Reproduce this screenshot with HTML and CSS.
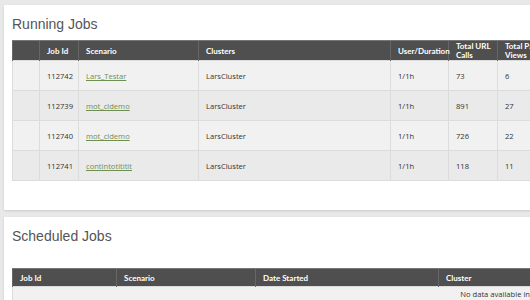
FILE: index.html
```html
<!DOCTYPE html>
<html lang="en">
<head>
    <meta charset="UTF-8">
    <title>Jobs</title>
    <link rel="stylesheet" href="styles.css">
</head>
<body>
<!-- running jobs -->
<div class="panel">
    <h2 class="panel-title">Running Jobs</h2>
    <table class="grid running">
        <colgroup>
            <col style="width:27px"><col style="width:39px"><col style="width:120px"><col style="width:192px">
            <col style="width:58px"><col style="width:49px"><col style="width:60px"><col>
        </colgroup>
        <thead>
        <tr>
            <th></th><th>Job Id</th><th>Scenario</th><th>Clusters</th><th>User/Duration</th>
            <th>Total URL Calls</th><th>Total Page Views</th><th>Errors</th>
        </tr>
        </thead>
        <tbody>
        <tr><td></td><td>112742</td><td><a href="#">Lars_Testar</a></td><td>LarsCluster</td><td>1/1h</td><td>73</td><td>6</td><td></td></tr>
        <tr><td></td><td>112739</td><td><a href="#">mot_cldemo</a></td><td>LarsCluster</td><td>1/1h</td><td>891</td><td>27</td><td></td></tr>
        <tr><td></td><td>112740</td><td><a href="#">mot_cldemo</a></td><td>LarsCluster</td><td>1/1h</td><td>726</td><td>22</td><td></td></tr>
        <tr><td></td><td>112741</td><td><a href="#">contintotititit</a></td><td>LarsCluster</td><td>1/1h</td><td>118</td><td>11</td><td></td></tr>
        </tbody>
    </table>
</div>

<!-- scheduled jobs -->
<div class="panel">
    <h2 class="panel-title">Scheduled Jobs</h2>
    <table class="grid scheduled">
        <colgroup>
            <col style="width:104px"><col style="width:139px"><col style="width:183px"><col>
        </colgroup>
        <thead>
        <tr><th>Job Id</th><th>Scenario</th><th>Date Started</th><th>Cluster</th></tr>
        </thead>
        <tbody>
        <tr><td class="empty" colspan="4">No data available in table</td></tr>
        </tbody>
    </table>
</div>
</body>
</html>
```

FILE: styles.css
```css
body {
    margin: 0;
    padding: 5px 0 0 4px;
    background-color: #e8e8e8;
    font-family: "Open Sans", "Liberation Sans", sans-serif;
    overflow: hidden;
}

/* panel */
.panel {
    width: 1100px;
    background-color: #fff;
    padding: 11px 8px 29px 8px;
    margin-bottom: 7px;
    box-shadow: 0 1px 2px rgba(0, 0, 0, 0.12);
}

.panel-title {
    margin: 0 0 8px 0;
    font-family: "Liberation Sans", Arial, sans-serif;
    font-size: 14px;
    font-weight: normal;
    color: #555;
    line-height: 16px;
}

/* tables */
.grid {
    border-collapse: collapse;
    table-layout: fixed;
    font-size: 8px;
    color: #333;
}

.grid.running {
    width: 640px;
}

.grid.scheduled {
    width: 986px;
    margin-top: 24px;
}

.grid th {
    background-color: #4f4f4f;
    color: #fff;
    font-family: Lato, "Open Sans", sans-serif;
    font-size: 8px;
    font-weight: bold;
    text-align: left;
    padding: 1px 2px 0 7px;
    height: 18px;
    line-height: 9px;
    border-left: 1px solid #666;
    border-top: 1px solid #777;
}

.grid.scheduled th {
    height: 16px;
}

.grid td {
    padding: 0 7px;
    height: 29px;
    border: 1px solid #dcdcdc;
    background-color: #f1f1f1;
    font-size: 7.6px;
}

.grid tbody tr:nth-child(even) td {
    background-color: #eaeaea;
}

.grid a {
    color: #6f8f52;
    text-decoration: underline;
}

.grid td.empty {
    text-align: center;
    height: 14px;
    color: #333;
}
```
